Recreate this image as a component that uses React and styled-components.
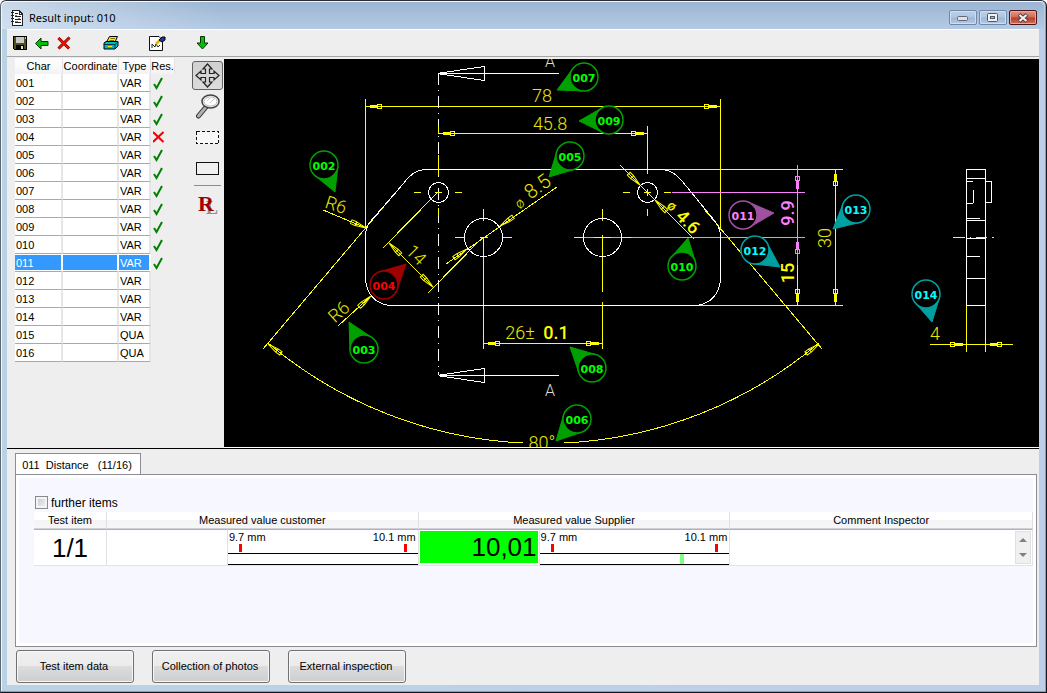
import React, { useState } from "react";
import styled, { createGlobalStyle } from "styled-components";

const GlobalStyle = createGlobalStyle`
  * {
    box-sizing: border-box;
  }

  body {
    margin: 0;
    font-family: "Liberation Sans", Arial, sans-serif;
    font-size: 11px;
    color: #000;
  }

  button,
  input,
  textarea {
    font: inherit;
    color: inherit;
  }
`;

const Window = styled.div`
  display: flex;
  flex-direction: column;
  min-height: 100vh;
  padding: 0 7px 7px 5px;
  border: 1px solid #14141c;
  border-top-color: #2c2c34;
  border-left-color: #5c6670;
  border-radius: 6px 6px 0 0;
  background: linear-gradient(90deg, #bad3e4, #bdcee8);
  box-shadow: inset -1px -1px 0 #3cc0d8, inset 1px 1px 0 #f4f8fc;
`;

const TitleBar = styled.header`
  display: flex;
  align-items: center;
  height: 27px;
  margin: 1px -5px 0 -4px;
  padding: 4px 7px 0 8px;
  border-radius: 5px 5px 0 0;
  background: linear-gradient(90deg, #e0ebf4aa, #e0ebf400 220px),
    linear-gradient(#9ab4d2, #a8c0dc 50%, #b4cae4);
`;

const Title = styled.h1`
  flex: 1;
  margin: 0 0 0 5px;
  font-family: "Noto Sans", "Open Sans", sans-serif;
  font-size: 11px;
  font-weight: 400;
  line-height: 16px;
`;

const Caption = styled.button`
  display: flex;
  align-items: center;
  justify-content: center;
  width: 28px;
  height: 15px;
  margin-left: 2px;
  padding: 0;
  border: 1px solid ${(p) => (p.$close ? "#4c1414" : "#7088a8")};
  border-radius: 2px;
  box-shadow: inset 0 0 0 1px ${(p) => (p.$close ? "#e8a8a0" : "#d0def0")};
  background: ${(p) =>
    p.$close
      ? "linear-gradient(#e09a8c, #cf6a58 48%, #b83a24 52%, #d0705c)"
      : "linear-gradient(#bcd0e8, #b0c6e0 48%, #9cb6d6 52%, #b4cae4)"};
`;

const Client = styled.main`
  display: flex;
  flex: 1;
  flex-direction: column;
  background: #eee;
  margin: 0 0 0 1px;
`;

const Toolbar = styled.div`
  display: flex;
  align-items: center;
  height: 28px;
  padding-left: 2px;
  border-top: 1px solid #fff;
  border-bottom: 1px solid #a4a4a4;
`;

const ToolbarButton = styled.button`
  display: flex;
  align-items: center;
  justify-content: center;
  width: 22px;
  height: 22px;
  margin-right: ${(p) => p.$after || 0}px;
  padding: 0;
  border: none;
  background: none;
`;

const Workspace = styled.section`
  display: flex;
  align-items: flex-start;
  padding-top: 1px;
  border-bottom: 1px solid #000;
`;

const CharTable = styled.table`
  width: 160px;
  margin-left: 8px;
  border-collapse: separate;
  border-spacing: 0;
  table-layout: fixed;
  font-size: 11px;
`;

const CharHead = styled.th`
  width: ${(p) => p.$width}px;
  height: 16px;
  padding: 0;
  border-right: 1px solid #e2e2e6;
  background: linear-gradient(#fdfdfd, #fafafa 50%, #f2f2f4);
  font-weight: 400;
  line-height: 14px;
  text-align: center;
`;

const CharCell = styled.td`
  height: 18px;
  padding: 0 1px;
  border-right: 2px solid ${(p) => (p.$selected ? "#fff" : "#e6e6ea")};
  border-bottom: 1px solid #a8a8b2;
  background: ${(p) => (p.$selected ? "#3399ff" : "#fff")};
  color: ${(p) => (p.$selected ? "#fff" : "#000")};
  box-shadow: ${(p) => (p.$selected ? "inset 0 1px 0 #fff, inset 0 -1px 0 #fff" : "none")};
  line-height: 16px;
`;

const ResultCell = styled.td`
  padding: 0 0 0 2px;
  line-height: 0;
`;

const Palette = styled.div`
  display: flex;
  flex-direction: column;
  align-items: center;
  gap: 2px;
  width: 31px;
  margin: 3px 1px 0 17px;
`;

const PaletteButton = styled.button`
  display: flex;
  align-items: center;
  justify-content: center;
  width: 31px;
  height: 29px;
  padding: 0;
  border: 1px solid ${(p) => (p.$active ? "#606060" : "transparent")};
  border-radius: 3px;
  background: ${(p) => (p.$active ? "linear-gradient(#d0d0d0, #dcdcdc)" : "none")};
`;

const PaletteRule = styled.hr`
  width: 27px;
  margin: 0 0 2px;
  border: none;
  border-top: 1px solid #8c8c8c;
`;

const Canvas = styled.div`
  flex: 1;
  min-width: 0;
  height: 389px;
  margin-top: 1px;
  overflow: hidden;
  border-bottom: 1px solid #fff;
  background: #000;

  svg {
    display: block;
  }
`;

const Details = styled.section`
  display: flex;
  flex: 1;
  flex-direction: column;
  padding: 4px 2px 0 8px;
`;

const Tab = styled.button`
  align-self: flex-start;
  width: 126px;
  height: 22px;
  margin-bottom: -1px;
  padding: 0 2px 0 0;
  border: 1px solid #8c8c96;
  border-bottom: none;
  background: #fff;
  line-height: 18px;
  text-align: center;
  white-space: pre;
`;

const TabPanel = styled.div`
  flex: 1;
  padding: 18px 1px 0 16px;
  border: 1px solid #8c8c96;
  box-shadow: inset 0 0 0 3px #fff;
  background: #f7f7ff;
`;

const CheckLabel = styled.label`
  display: flex;
  align-items: center;
  gap: 3px;
  height: 19px;
  padding-left: 3px;
  font-size: 12px;
`;

const CheckBox = styled.input`
  appearance: none;
  width: 13px;
  height: 13px;
  margin: 0;
  border: 1px solid #8a8a8a;
  background: linear-gradient(135deg, #c4cad0, #f4f4f4);
  box-shadow: inset 0 0 0 2px #f4f4f4;

  &:checked {
    background: #3070b0;
  }
`;

const ItemTable = styled.table`
  width: calc(100% - 4px);
  margin-left: 2px;
  border-collapse: separate;
  border-spacing: 0;
  table-layout: fixed;
`;

const ItemHead = styled.th`
  height: 17px;
  padding: 0;
  border-right: 1px solid #dedee4;
  border-bottom: 1px solid #d0d0d8;
  background: linear-gradient(#fff, #fff 50%, #f4f4f6 50%, #f6f6f8);
  font-weight: 400;
  line-height: 14px;
`;

const ItemCell = styled.td`
  height: 37px;
  padding: 0;
  border-top: 1px solid #b0b0b8;
  border-right: 1px solid #e2e2e8;
  border-bottom: 1px solid #e2e2e8;
  background: #fff;
  font-size: ${(p) => (p.$big ? 26 : 11)}px;
  line-height: 32px;
  text-align: center;
`;

const ValueInput = styled.input`
  display: block;
  width: 100%;
  height: 35px;
  padding: 0 1px;
  border: 1px solid #fff;
  border-bottom-width: 2px;
  background: ${(p) => (p.$ok ? "#00ff00" : "#fff")};
  font-size: 26px;
  line-height: 32px;
  text-align: right;
  outline: none;
`;

const GaugeBox = styled.div`
  display: flex;
  flex-direction: column;
  height: 35px;
`;

const Limits = styled.div`
  display: flex;
  justify-content: space-between;
  height: 14px;
  padding: 0 2px 0 1px;
  line-height: 14px;
`;

const Marks = styled.div`
  display: flex;
  justify-content: space-between;
  height: 9px;
  padding: 0 11px;
`;

const Mark = styled.span`
  width: 3px;
  height: 8px;
  background: #f00;
`;

const Band = styled.div`
  height: 12px;
  padding: 0 12px;
  border-top: 1px solid #000;
  border-bottom: 1px solid #000;
`;

const BandValue = styled.div`
  width: 4px;
  height: 10px;
  background: #80ff80;
`;

const CommentBox = styled.div`
  display: flex;
  height: 35px;
  padding: 1px;
`;

const CommentInput = styled.textarea`
  flex: 1;
  min-width: 0;
  border: none;
  resize: none;
  outline: none;
  overflow: hidden;
`;

const Scroller = styled.div`
  display: flex;
  flex-direction: column;
  width: 16px;
  border: 1px solid #e0e0e0;
  background: #f0f0f0;
`;

const ScrollButton = styled.button`
  display: flex;
  flex: 1;
  align-items: center;
  justify-content: center;
  padding: 0;
  border: none;
  background: none;
`;

const Actions = styled.footer`
  display: flex;
  gap: 18px;
  padding: 3px 0 2px 1px;
`;

const ActionButton = styled.button`
  width: 118px;
  height: 33px;
  padding: 0 2px 2px 0;
  border: 1px solid #707070;
  border-radius: 3px;
  box-shadow: inset 0 0 0 1px #f8f8f8;
  background: linear-gradient(#f0f0f0, #ebebeb 49%, #dcdcdc 50%, #cecece);
`;

const CHARS = [
  ["001", "VAR", "ok"],
  ["002", "VAR", "ok"],
  ["003", "VAR", "ok"],
  ["004", "VAR", "bad"],
  ["005", "VAR", "ok"],
  ["006", "VAR", "ok"],
  ["007", "VAR", "ok"],
  ["008", "VAR", "ok"],
  ["009", "VAR", "ok"],
  ["010", "VAR", "ok"],
  ["011", "VAR", "ok"],
  ["012", "VAR"],
  ["013", "VAR"],
  ["014", "VAR"],
  ["015", "QUA"],
  ["016", "QUA"],
];

const GREEN = ["#00a000", "#00ff00"];
const RED = ["#a00000", "#ff0000"];
const PURPLE = ["#a050a0", "#ff80ff"];
const TEAL = ["#00a0a0", "#00ffff"];

// id, centre, tip, [line colour, text colour]
const BALLOONS = [
  ["002", 324, 165, 335, 192, GREEN],
  ["003", 364, 349, 349, 322, GREEN],
  ["004", 384, 285, 406, 264, RED],
  ["005", 570, 156, 549, 177, GREEN],
  ["006", 577, 419, 556, 441, GREEN],
  ["007", 584, 77, 557, 90, GREEN],
  ["008", 592, 368, 570, 347, GREEN],
  ["009", 609, 120, 579, 121, GREEN],
  ["010", 682, 266, 688, 238, GREEN],
  ["011", 743, 215, 774, 213, PURPLE],
  ["012", 755, 250, 780, 267, TEAL],
  ["013", 856, 209, 833, 229, TEAL],
  ["014", 926, 294, 932, 322, TEAL],
];

const ResultMark = ({ result }) => {
  if (result === "ok") {
    return (
      <svg width="12" height="13" viewBox="0 0 12 13" role="img" aria-label="ok">
        <path d="M1 7L3.500 11L9 1" fill="none" stroke="#008000" strokeWidth="2" />
      </svg>
    );
  }
  return (
    <svg width="12" height="13" viewBox="0 0 12 13" role="img" aria-label="not ok">
      <path d="M0 1L10.500 11M10.500 1L0 11" stroke="#f00000" strokeWidth="2" />
    </svg>
  );
};

const Balloon = ({ id, cx, cy, tx, ty, colors }) => {
  const r = 14;
  const dist = Math.hypot(tx - cx, ty - cy);
  const dir = Math.atan2(ty - cy, tx - cx);
  const spread = Math.acos(r / dist);
  const at = (a) => `${cx + r * Math.cos(a)},${cy + r * Math.sin(a)}`;
  return (
    <g>
      <polygon
        points={`${tx},${ty} ${at(dir - spread)} ${at(dir + spread)}`}
        fill={colors[0]}
        stroke={colors[0]}
      />
      <circle cx={cx} cy={cy} r={r} fill="#000" stroke={colors[0]} strokeWidth="1.5" />
      <text
        x={cx}
        y={cy + 5}
        fill={colors[1]}
        textAnchor="middle"
        fontFamily="DejaVu Sans, sans-serif"
        fontSize="11"
        fontWeight="700"
      >
        {id}
      </text>
    </g>
  );
};

// angle 0: the tip points left
const Arrow = ({ x, y, angle = 0, color = "#ff0", open }) => (
  <g transform={`translate(${x} ${y}) rotate(${angle})`} stroke={color}>
    {open ? (
      <path d="M0 0L11 -2M0 0L11 2M11 -2H16V2H11Z" fill="none" />
    ) : (
      <>
        <path d="M2 0H12" strokeWidth="1" />
        <path d="M4 0H12" strokeWidth="3" />
        <rect x="12" y="-2" width="4" height="4" fill="none" />
      </>
    )}
  </g>
);

const Dim = ({ x, y, angle = 0, bold, color = "#e8e800", size = 18, children }) => (
  <text
    transform={`translate(${x} ${y}) rotate(${angle})`}
    dy="6"
    fill={color}
    textAnchor="middle"
    fontFamily="Roboto, sans-serif"
    fontSize={size}
    fontWeight={bold ? 500 : 300}
  >
    {children}
  </text>
);

const PartDrawing = () => (
  <svg width="815" height="388" viewBox="224 59 815 388" role="img" aria-label="Part drawing">
    <g fill="none" stroke="#ff0" shapeRendering="crispEdges">
      <path d="M365.5 99V228M720.5 99V230M365 106.5H720M438 133.5H647M647.5 126V174" />
      <path d="M663 169.5H843M697 305.5H843M835.5 170V305M797.5 265V305" />
      <path d="M483.5 237V349M483.5 209V221M455 237.5H465M480 237.5H488M502 237.5H512" />
      <path d="M602.5 209V221M602.5 235V292M602.5 302V349M484 343.5H602" />
      <path d="M414 192.5H421M455 192.5H462M623 192.5H630M664 192.5H671M647.5 209V216M644 192.5H651M647.5 189V196" />
      <path d="M574 237.5H584M594 237.5H611M621 237.5H631" />
      <path d="M438 192L383 248M483 237L428 293M389 243L433 287" />
      <path d="M557 187L446 264M620 165L694 239M323 210L366 228M338 326L371 296" />
      <path d="M397 191L263 349M704 209L822 349" />
      <path d="M268 343A427 427 0 0 0 523 443M564 443A427 427 0 0 0 819 343" />
      <path d="M966.5 305V352M985.5 305V352M930 344.5H1013M953 237.5H965M970 237.5H971M976 237.5H987M992 237.5H994" />
    </g>
    <g fill="none" stroke="#ff80ff" shapeRendering="crispEdges">
      <path d="M672 192.5H805M584 237.5H594M611 237.5H621M631 237.5H805M797.5 165V265" />
    </g>
    <g fill="none" stroke="#fff" shapeRendering="crispEdges">
      <path d="M424 169.5H663Q674 171 682 181L714 220Q720.5 228 720.5 236V280Q718 302 697 305.5H389Q368 302 365.5 280V236Q365.5 228 370 222L403 184Q412 171 424 169.5Z" />
      <circle cx="438.5" cy="192.5" r="10" />
      <circle cx="647.5" cy="192.5" r="10" />
      <circle cx="483.5" cy="237.5" r="19" />
      <circle cx="602.5" cy="237.5" r="19" />
      <path d="M438.5 73V375" strokeDasharray="12 5 1 5" />
      <path d="M439 73.5H559M440 73L484.5 66.5V80.5L440 74M439 375.5H559M440 375L484.5 368.5V382.5L440 376" />
      <path d="M966.5 169.5H985.5V305.5H966.5ZM966 178.5H985M966 181.5H973M966 203.5H973M973.5 190V203M985 181.5H991.5V202.5H985M966 218.5H980M966 220.5H985M966 238.5H985M966 256.5H980M966 278.5H985" />
    </g>
    <path
      d="M438.5 126V134M438.5 155V176M438.5 208V216M435 192.5H442"
      stroke="#ff0"
      shapeRendering="crispEdges"
    />

    <g shapeRendering="crispEdges">
      <Arrow x={365.5} y={106.5} />
      <Arrow x={720.5} y={106.5} angle={180} />
      <Arrow x={438.5} y={133.5} />
      <Arrow x={647.5} y={133.5} angle={180} />
      <Arrow x={483.5} y={343.5} />
      <Arrow x={602.5} y={343.5} angle={180} />
      <Arrow x={835.5} y={169.5} angle={90} />
      <Arrow x={835.5} y={305.5} angle={-90} />
      <Arrow x={797.5} y={305.5} angle={-90} />
      <Arrow x={797.5} y={192.5} angle={-90} color="#ff80ff" />
      <Arrow x={797.5} y={237.5} angle={90} color="#ff80ff" />
      <Arrow x={966.5} y={344.5} angle={180} />
      <Arrow x={985.5} y={344.5} />
    </g>
    <Arrow open x={366} y={228} angle={203} />
    <Arrow open x={371} y={296} angle={138} />
    <Arrow open x={389} y={243} angle={45} />
    <Arrow open x={433} y={287} angle={225} />
    <Arrow open x={500} y={226} angle={-35} />
    <Arrow open x={467} y={249} angle={145} />
    <Arrow open x={640} y={185} angle={225} />
    <Arrow open x={655} y={200} angle={45} />
    <Arrow open x={268} y={344} angle={36} />
    <Arrow open x={819} y={344} angle={144} />

    <Dim x={542} y={96}>78</Dim>
    <Dim x={550} y={124}>45.8</Dim>
    <Dim x={519} y={202} angle={-33} size={14}>ø</Dim>
    <Dim x={538} y={187} angle={-36} size={20}>8.5</Dim>
    <Dim x={673} y={205} angle={45} size={14} bold>ø</Dim>
    <Dim x={688} y={222} angle={45} color="#ff0" bold>4.6</Dim>
    <Dim x={416} y={255} angle={45}>14</Dim>
    <Dim x={336} y={205} angle={18}>R6</Dim>
    <Dim x={339} y={312} angle={-42}>R6</Dim>
    <Dim x={788} y={213} angle={-90} color="#ff80ff" bold>9.9</Dim>
    <Dim x={788} y={273} angle={-90} color="#ff0" bold>15</Dim>
    <Dim x={825} y={238} angle={-90}>30</Dim>
    <Dim x={520} y={333}>26±</Dim>
    <Dim x={556} y={333} color="#ff0" bold>0.1</Dim>
    <Dim x={542} y={443}>80°</Dim>
    <Dim x={935} y={334}>4</Dim>
    <Dim x={550} y={61} color="#ddd" size={16}>A</Dim>
    <Dim x={550} y={390} color="#ddd" size={16}>A</Dim>

    {BALLOONS.map(([id, cx, cy, tx, ty, colors]) => (
      <Balloon key={id} id={id} cx={cx} cy={cy} tx={tx} ty={ty} colors={colors} />
    ))}
  </svg>
);

const Gauge = ({ min, max, value }) => (
  <GaugeBox>
    <Limits>
      <span>{min} mm</span>
      <span>{max} mm</span>
    </Limits>
    <Marks>
      <Mark />
      <Mark />
    </Marks>
    <Band>
      {value !== undefined && (
        <BandValue style={{ marginLeft: `${((value - min) / (max - min)) * 100}%` }} />
      )}
    </Band>
  </GaugeBox>
);

const WindowHeader = () => (
  <TitleBar>
    <svg width="14" height="16" viewBox="0 0 14 16" shapeRendering="crispEdges">
      <path d="M2.500 .5H9L12.500 4V15.500H2.500Z" fill="#fff" stroke="#222" />
      <path d="M9.500 0V4H13" fill="none" stroke="#222" />
      <path
        d="M1 2.500H4M1 5.500H4M1 8.500H4M1 11.500H4M5 3.500H8M5 6.500H11M5 9.500H11M5 12.500H11"
        stroke="#222"
      />
      <path d="M5 5.500H7M8 8.500H10M5 11.500H8" stroke="#888" />
    </svg>
    <Title>Result input: 010</Title>
    <Caption aria-label="Minimize">
      <svg width="12" height="6" viewBox="0 0 12 6">
        <rect x=".5" y="1.500" width="10" height="4" rx="1" fill="#e0e0e0" stroke="#606878" />
      </svg>
    </Caption>
    <Caption aria-label="Maximize">
      <svg width="12" height="10" viewBox="0 0 12 10">
        <rect x=".5" y=".5" width="10" height="8" rx="1" fill="#f0f0f0" stroke="#505868" />
        <rect x="3.500" y="3.500" width="4" height="2" fill="#a8c0dc" stroke="#505868" />
      </svg>
    </Caption>
    <Caption $close aria-label="Close">
      <svg width="12" height="10" viewBox="0 0 12 10">
        <path d="M2 1.500L10 8.500M10 1.500L2 8.500" stroke="#504048" strokeWidth="4" />
        <path d="M2.500 2L9.500 8M9.500 2L2.500 8" stroke="#f4f4f4" strokeWidth="2" />
      </svg>
    </Caption>
  </TitleBar>
);

const MainToolbar = () => (
  <Toolbar>
    <ToolbarButton aria-label="Save">
      <svg width="14" height="14" viewBox="0 0 14 14" shapeRendering="crispEdges">
        <path d="M.5 .5H13.500V13.500H1.500L.5 12.500Z" fill="#505018" stroke="#000" />
        <rect x="3" y="1" width="8" height="6" fill="#c8c8c8" />
        <rect x="3" y="9" width="8" height="5" fill="#000" />
        <rect x="8" y="10" width="2" height="3" fill="#e0e0e0" />
        <rect x="12" y="1" width="1" height="2" fill="#c8c8c8" />
      </svg>
    </ToolbarButton>
    <ToolbarButton aria-label="Back">
      <svg width="14" height="13" viewBox="0 0 14 13">
        <path d="M.5 6.500L6 1V4.500H13V8.500H6V12Z" fill="#00c000" stroke="#003800" />
      </svg>
    </ToolbarButton>
    <ToolbarButton $after={25} aria-label="Delete">
      <svg width="14" height="14" viewBox="0 0 14 14">
        <path d="M1.500 2L12 12.500M12.500 1.500L1.500 12.500" stroke="#600000" strokeWidth="3" />
        <path d="M1.500 2L12 12.500M12.500 1.500L1.500 12.500" stroke="#f01000" strokeWidth="2" />
      </svg>
    </ToolbarButton>
    <ToolbarButton $after={24} aria-label="Print">
      <svg width="16" height="14" viewBox="0 0 16 14">
        <path d="M3.500 6L6.500 .5H14.500L12 6Z" fill="#ffe800" stroke="#000" />
        <path d="M7.500 2.500H12M6.500 4.500H11" stroke="#807000" />
        <path d="M1 7L3 5.500H15V10L12 13H1Z" fill="#00b8c8" stroke="#000" />
        <path d="M1 8.500H12L15 6M12 8.500V13" fill="none" stroke="#003848" />
        <path d="M5 10.500H9" stroke="#ffe800" />
      </svg>
    </ToolbarButton>
    <ToolbarButton $after={23} aria-label="Edit report">
      <svg width="17" height="16" viewBox="0 0 17 16">
        <path d="M.5 1.500H10L13.500 5V15.500H.5Z" fill="#fff" stroke="#111" />
        <path d="M3 13V9L6 12L7 9L9 12L11 10" fill="none" stroke="#222" />
        <path d="M7 9L12 4" stroke="#d8b800" strokeWidth="2.500" />
        <path d="M10 5L13 2H16V5L13 7Z" fill="#1838b0" stroke="#000" />
      </svg>
    </ToolbarButton>
    <ToolbarButton aria-label="Next">
      <svg width="13" height="14" viewBox="0 0 13 14">
        <path d="M4.500 .5H8.500V7H12L6.500 13L1 7H4.500Z" fill="#00c000" stroke="#003800" />
      </svg>
    </ToolbarButton>
  </Toolbar>
);

const DrawingTools = () => (
  <Palette>
    <PaletteButton $active aria-label="Pan">
      <svg width="26" height="26" viewBox="0 0 26 26">
        <path
          d="M12.500 1L17 6H14.500V10.500H19V8L24 12.500L19 17V14.500H14.500V19H17L12.500 24L8 19H10.500V14.500H6V17L1 12.500L6 8V10.500H10.500V6H8Z"
          fill="#d4d4d4"
          stroke="#222"
          strokeWidth="1.2"
        />
      </svg>
    </PaletteButton>
    <PaletteButton aria-label="Zoom">
      <svg width="24" height="25" viewBox="0 0 24 25">
        <path d="M10 13L2.500 22" stroke="#333" strokeWidth="5" strokeLinecap="round" />
        <path d="M10 13L2.500 22" stroke="#b0b0b0" strokeWidth="3" strokeLinecap="round" />
        <ellipse cx="14.500" cy="7.500" rx="8.500" ry="6.500" fill="#f4f4f4" stroke="#444" strokeWidth="1.500" />
        <ellipse cx="14.500" cy="7.500" rx="6.500" ry="4.500" fill="#fff" stroke="#bbb" />
        <path d="M11 7L14 4M14 9L18 5" stroke="#ccc" />
      </svg>
    </PaletteButton>
    <PaletteButton aria-label="Select area">
      <svg width="24" height="14" viewBox="0 0 24 14" shapeRendering="crispEdges">
        <rect x=".5" y=".5" width="22" height="12" fill="#f8f8f8" stroke="#111" strokeDasharray="3 2" />
      </svg>
    </PaletteButton>
    <PaletteButton aria-label="Rectangle">
      <svg width="24" height="14" viewBox="0 0 24 14" shapeRendering="crispEdges">
        <rect x=".5" y=".5" width="22" height="12" fill="#f0f0f0" stroke="#111" />
      </svg>
    </PaletteButton>
    <PaletteRule />
    <PaletteButton aria-label="RL">
      <svg width="24" height="28" viewBox="0 0 24 28" fontFamily="Liberation Serif, serif" fontWeight="700">
        <text x="10" y="23" fontSize="18" fill="#909090">L</text>
        <text x="2" y="20" fontSize="22" fill="#a00000">R</text>
      </svg>
    </PaletteButton>
  </Palette>
);

const CharacteristicList = ({ selected, onSelect }) => (
  <CharTable>
    <thead>
      <tr>
        <CharHead $width={48}>Char</CharHead>
        <CharHead $width={56}>Coordinate</CharHead>
        <CharHead $width={32}>Type</CharHead>
        <CharHead $width={24}>Res.</CharHead>
      </tr>
    </thead>
    <tbody>
      {CHARS.map(([id, type, result]) => (
        <tr key={id} onClick={() => onSelect(id)}>
          <CharCell $selected={id === selected}>{id}</CharCell>
          <CharCell $selected={id === selected} />
          <CharCell $selected={id === selected}>{type}</CharCell>
          <ResultCell>{result && <ResultMark result={result} />}</ResultCell>
        </tr>
      ))}
    </tbody>
  </CharTable>
);

const TestItems = () => (
  <ItemTable>
    <colgroup>
      <col style={{ width: "73px" }} />
      <col style={{ width: "12.1%" }} />
      <col style={{ width: "19.1%" }} />
      <col style={{ width: "12.1%" }} />
      <col style={{ width: "19.1%" }} />
      <col />
    </colgroup>
    <thead>
      <tr>
        <ItemHead>Test item</ItemHead>
        <ItemHead colSpan={2}>Measured value customer</ItemHead>
        <ItemHead colSpan={2}>Measured value Supplier</ItemHead>
        <ItemHead>Comment Inspector</ItemHead>
      </tr>
    </thead>
    <tbody>
      <tr>
        <ItemCell $big>1/1</ItemCell>
        <ItemCell>
          <ValueInput aria-label="Measured value customer" />
        </ItemCell>
        <ItemCell>
          <Gauge min={9.7} max={10.1} />
        </ItemCell>
        <ItemCell>
          <ValueInput $ok aria-label="Measured value Supplier" defaultValue="10,01" />
        </ItemCell>
        <ItemCell>
          <Gauge min={9.7} max={10.1} value={10.01} />
        </ItemCell>
        <ItemCell>
          <CommentBox>
            <CommentInput aria-label="Comment Inspector" />
            <Scroller>
              <ScrollButton aria-label="Scroll up">
                <svg width="8" height="4" viewBox="0 0 8 4">
                  <path d="M0 4L4 0L8 4Z" fill="#808080" />
                </svg>
              </ScrollButton>
              <ScrollButton aria-label="Scroll down">
                <svg width="8" height="4" viewBox="0 0 8 4">
                  <path d="M0 0H8L4 4Z" fill="#808080" />
                </svg>
              </ScrollButton>
            </Scroller>
          </CommentBox>
        </ItemCell>
      </tr>
    </tbody>
  </ItemTable>
);

const App = () => {
  const [selected, setSelected] = useState("011");

  return (
    <>
      <GlobalStyle />
      <Window>
        <WindowHeader />
        <Client>
          <MainToolbar />
          <Workspace>
            <CharacteristicList selected={selected} onSelect={setSelected} />
            <DrawingTools />
            <Canvas>
              <PartDrawing />
            </Canvas>
          </Workspace>
          <Details>
            <Tab>{`${selected}  Distance   (${Number(selected)}/16)`}</Tab>
            <TabPanel>
              <CheckLabel>
                <CheckBox type="checkbox" />
                further items
              </CheckLabel>
              <TestItems />
            </TabPanel>
            <Actions>
              <ActionButton>Test item data</ActionButton>
              <ActionButton>Collection of photos</ActionButton>
              <ActionButton>External inspection</ActionButton>
            </Actions>
          </Details>
        </Client>
      </Window>
    </>
  );
};

export default App;
